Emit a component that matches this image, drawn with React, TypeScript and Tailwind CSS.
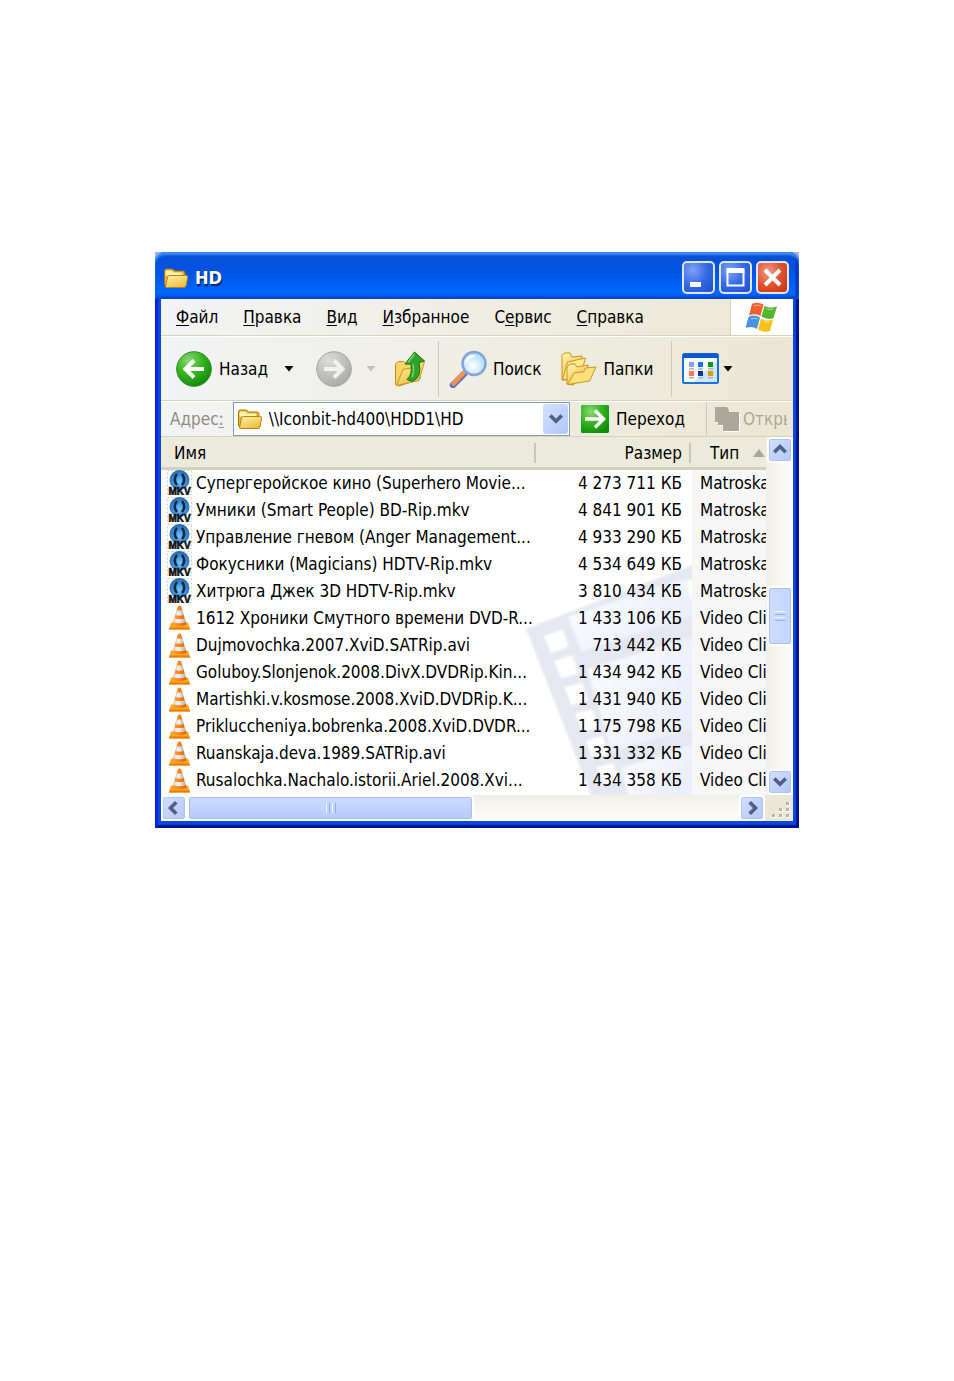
import type { ReactNode } from 'react';

// =============================================================================
// DATA
// =============================================================================
const MENU_ITEMS = [
  { before: '', key: 'Ф', after: 'айл' },
  { before: '', key: 'П', after: 'равка' },
  { before: '', key: 'В', after: 'ид' },
  { before: '', key: 'И', after: 'збранное' },
  { before: 'С', key: 'е', after: 'рвис' },
  { before: '', key: 'С', after: 'правка' },
];

const FILES = [
  { name: 'Супергеройское кино (Superhero Movie...', size: '4 273 711 КБ', kind: 'mkv' },
  { name: 'Умники (Smart People) BD-Rip.mkv', size: '4 841 901 КБ', kind: 'mkv' },
  { name: 'Управление гневом (Anger Management...', size: '4 933 290 КБ', kind: 'mkv' },
  { name: 'Фокусники (Magicians) HDTV-Rip.mkv', size: '4 534 649 КБ', kind: 'mkv' },
  { name: 'Хитрюга Джек 3D HDTV-Rip.mkv', size: '3 810 434 КБ', kind: 'mkv' },
  { name: '1612 Хроники Смутного времени DVD-R...', size: '1 433 106 КБ', kind: 'avi' },
  { name: 'Dujmovochka.2007.XviD.SATRip.avi', size: '713 442 КБ', kind: 'avi' },
  { name: 'Goluboy.Slonjenok.2008.DivX.DVDRip.Kin...', size: '1 434 942 КБ', kind: 'avi' },
  { name: 'Martishki.v.kosmose.2008.XviD.DVDRip.K...', size: '1 431 940 КБ', kind: 'avi' },
  { name: 'Prikluccheniya.bobrenka.2008.XviD.DVDR...', size: '1 175 798 КБ', kind: 'avi' },
  { name: 'Ruanskaja.deva.1989.SATRip.avi', size: '1 331 332 КБ', kind: 'avi' },
  { name: 'Rusalochka.Nachalo.istorii.Ariel.2008.Xvi...', size: '1 434 358 КБ', kind: 'avi' },
];

// =============================================================================
// ICONS
// =============================================================================

// Gradients shared by all the icons
const IconDefs = () => (
  <svg className="absolute h-0 w-0" aria-hidden="true">
    <defs>
      <linearGradient id="folder" x1="0" y1="0" x2="0.6" y2="1">
        <stop offset="0" stopColor="#fff6ae" />
        <stop offset="1" stopColor="#f0bc42" />
      </linearGradient>
      <radialGradient id="green" cx="0.35" cy="0.25" r="0.8">
        <stop offset="0" stopColor="#8ad974" />
        <stop offset="0.5" stopColor="#35b41f" />
        <stop offset="1" stopColor="#0f8a0b" />
      </radialGradient>
      <radialGradient id="grey" cx="0.35" cy="0.25" r="0.8">
        <stop offset="0" stopColor="#dcdcda" />
        <stop offset="1" stopColor="#a9a9a6" />
      </radialGradient>
      <radialGradient id="ball" cx="0.5" cy="0.6" r="0.6">
        <stop offset="0" stopColor="#74c4f6" />
        <stop offset="0.6" stopColor="#3c8bd2" />
        <stop offset="1" stopColor="#2462a6" />
      </radialGradient>
      <radialGradient id="lens" cx="0.45" cy="0.6" r="0.6">
        <stop offset="0" stopColor="#ffffff" />
        <stop offset="1" stopColor="#a8dcfa" />
      </radialGradient>
      <linearGradient id="cone" x1="0" y1="0" x2="1" y2="0">
        <stop offset="0" stopColor="#ffa040" />
        <stop offset="0.5" stopColor="#ff8212" />
        <stop offset="1" stopColor="#d95c00" />
      </linearGradient>
      <linearGradient id="band" x1="0" y1="0" x2="1" y2="0">
        <stop offset="0" stopColor="#d2d2d2" />
        <stop offset="0.4" stopColor="#f2f2f2" />
        <stop offset="1" stopColor="#b4b4b4" />
      </linearGradient>
    </defs>
  </svg>
);

const FolderIcon = () => (
  <svg viewBox="0 0 26 22" className="h-[22px] w-[26px] shrink-0" aria-hidden="true">
    <path d="M1.500 18V4q0-2 2-2h5q2 0 3 2h8.500q2 0 2 2v13z" fill="#e9b83c" stroke="#a87408" />
    <path d="M2.500 5q0-1.500 1.500-1.500h3.500q1.500 0 2.500 2h9v3h-16.500z" fill="#fff2a8" />
    <path d="M2.500 20L4.500 10q.5-1.500 2-1.500h17q1.500 0 1.200 1.500l-1.700 9q-.5 1.500-2 1.500H3.500q-1 0-1-.5z" fill="url(#folder)" stroke="#b8860f" />
  </svg>
);

const RoundArrow = ({ forward = false }: { forward?: boolean }) => (
  <svg viewBox="0 0 36 36" className="h-9 w-9" aria-hidden="true">
    <circle cx="18" cy="18" r="17.300" fill={forward ? 'url(#grey)' : 'url(#green)'} stroke={forward ? '#a5a5a2' : '#2a8b22'} />
    <path
      d={forward ? 'M8 18h18M18 9.500l8.500 8.500-8.500 8.500' : 'M28 18H10M18 9.500L9.500 18l8.500 8.500'}
      fill="none"
      stroke={forward ? '#f1f1ee' : '#fff'}
      strokeWidth="4"
    />
  </svg>
);

const UpFolderIcon = () => (
  <svg viewBox="0 0 32 36" className="h-9 w-8" aria-hidden="true">
    <path d="M1.500 33.500V13l3-2.500h5l2.500 2.500 12-1 2 3v13L5 35z" fill="#f6d568" stroke="#c08a14" />
    <path d="M2.500 34.500L9 18.500l8-1.500 3-5 10.500-1.500-5.500 19z" fill="url(#folder)" stroke="#c9971f" />
    <path d="M13 28.500q5.500-4 4-15.500h-6L20.500 1 30.500 10l-5.500 1.500q3.500 15-7 19z" fill="#2fa32a" stroke="#16760f" />
    <path d="M14 11.500L20.500 3M19 13q1.500 8-1 13" fill="none" stroke="#7ed36c" strokeWidth="1.500" />
  </svg>
);

const SearchIcon = () => (
  <svg viewBox="0 0 38 38" className="h-[38px] w-[38px]" aria-hidden="true">
    <path d="M4 35L15 24" stroke="#6a6db8" strokeWidth="6.500" strokeLinecap="round" />
    <path d="M4.500 33.500L14.500 23" stroke="#ee9450" strokeWidth="4.500" strokeLinecap="round" />
    <circle cx="25" cy="13.500" r="11.500" fill="url(#lens)" stroke="#84a4de" strokeWidth="2.500" />
    <path d="M17.500 11.500q2-5 7-5.500" fill="none" stroke="#fff" strokeWidth="2.500" strokeLinecap="round" />
  </svg>
);

const FoldersIcon = () => (
  <svg viewBox="0 0 36 34" className="h-[34px] w-9" aria-hidden="true">
    <path d="M1 28V3l3-2h5l2 4 10-1v9L6 28z" fill="url(#folder)" stroke="#c9951c" />
    <path d="M1.500 28l5-18 18-4-5 18z" fill="#fdeb92" stroke="#c9951c" />
    <path d="M6 32V15l3-3h5l2 3 11-2v7L12 33z" fill="url(#folder)" stroke="#c9951c" />
    <path d="M6.500 32.500l7-12 9-.5 2-4 10.500-1-6.500 14z" fill="#fbe07a" stroke="#c9951c" />
  </svg>
);

const VIEW_SWATCHES = [
  { x: 7, y: 9, color: '#9a9ad6' },
  { x: 16, y: 9, color: '#1177e8' },
  { x: 26, y: 9, color: '#0e9a10' },
  { x: 7, y: 18, color: '#ff7c4a' },
  { x: 16, y: 18, color: '#0b35a5' },
  { x: 26, y: 18, color: '#d49c00' },
];

const ViewsIcon = () => (
  <svg viewBox="0 0 37 31" className="h-[31px] w-[37px]" aria-hidden="true">
    <rect x="1" y="1" width="35" height="29" rx="1.500" fill="#f4f9ff" stroke="#1a72dc" strokeWidth="2" />
    <path d="M1 2q0-1.500 1.500-1.500h32Q36 .5 36 2v3H1z" fill="#0a58d4" />
    <path d="M35 8v21H12z" fill="#cfe3fb" />
    {VIEW_SWATCHES.map((s) => (
      <g key={s.color}>
        <rect x={s.x} y={s.y} width="5" height="5" fill={s.color} />
        <rect x={s.x} y={s.y + 6} width="5" height="1.500" fill="#b4b4b4" />
      </g>
    ))}
  </svg>
);

const GoIcon = () => (
  <svg viewBox="0 0 30 30" className="h-[30px] w-[30px]" aria-hidden="true">
    <rect x="0.500" y="0.500" width="29" height="29" rx="2" fill="url(#green)" stroke="#e6f2e0" />
    <path d="M5 15h18M15 6.500l8.500 8.500-8.500 8.500" fill="none" stroke="#fff" strokeWidth="3.500" />
  </svg>
);

const OpenIcon = () => (
  <svg viewBox="0 0 27 27" className="h-[27px] w-[27px] shrink-0" aria-hidden="true">
    <path d="M2 2h12l2 3v3h10v18H10v-6H5v-3H2z" fill="#fff" />
    <path d="M1 1h12l2 3v2h10v19H9v-6H4v-3H1z" fill="#aca899" />
  </svg>
);

const FlagIcon = () => (
  <svg viewBox="0 0 32 30" className="h-[30px] w-8" aria-hidden="true">
    <path d="M6 2Q11-.5 17.500 2.500l-3 11.500Q9 11 3 13.500z" fill="#ee6230" />
    <path d="M18.500 4q6 3 12.500 .5L27.500 16q-6 2.500-12-1.500z" fill="#54b52e" />
    <path d="M2.500 15q6-3 11.500 0.500L11 27q-5-3.500-11.500-1z" fill="#4a93e2" />
    <path d="M15 16.500q6 3.500 12 1L24 29q-5.500 2-12-1.500z" fill="#f8c11a" />
    <path d="M8 4q4-2 7 0M20 6.500q4 2 7 .8M5 17q3-1.500 6.500 0M17 19q3 1.500 6 .8" fill="none" stroke="#fff" strokeOpacity=".5" />
  </svg>
);

const MkvIcon = () => (
  <svg viewBox="0 0 25 25" className="h-[25px] w-[25px] shrink-0" aria-hidden="true">
    <rect x="0.500" y="0.500" width="24" height="24" fill="none" stroke="#cfcfcf" strokeDasharray="2 2" />
    <circle cx="12.500" cy="10" r="10" fill="url(#ball)" />
    <path d="M10 4Q5.500 9.500 10 15M15 4q4.500 5.500 0 11" fill="none" stroke="#0c2440" strokeWidth="2.400" />
    <text x="12.500" y="24.800" textAnchor="middle" fontFamily="Liberation Sans, sans-serif" fontWeight="700" fontSize="10" fill="#111" stroke="#111" strokeWidth=".6">MKV</text>
  </svg>
);

const ConeIcon = () => (
  <svg viewBox="0 0 25 25" className="h-[25px] w-[25px] shrink-0" aria-hidden="true">
    <path d="M4 17.500h17l2 7H2z" fill="#ffa51e" />
    <path d="M2.400 22.500h20.200l.4 2.100H2z" fill="#ee7a06" />
    <path d="M11 1q1.500-1.200 3 0l5.500 18.500q-7 3-14 0z" fill="url(#cone)" />
    <path d="M9.800 5.500h5.400l1.500 4.600q-4.200 1.200-8.400 0z" fill="url(#band)" />
    <path d="M7.200 13.500q5.300 1.200 10.600 0l1 3.800q-6.300 1.800-12.600 0z" fill="url(#band)" />
  </svg>
);

const CaretDown = ({ muted = false }: { muted?: boolean }) => (
  <svg viewBox="0 0 10 6" className={`h-1.5 w-2.5 ${muted ? 'text-[#c4c1b6]' : 'text-black'}`} aria-hidden="true">
    <path d="M.5 0h9L5 5.500z" fill="currentColor" />
  </svg>
);

const CHEVRONS = {
  up: 'M2 9l5-5 5 5',
  down: 'M2 4l5 5 5-5',
  left: 'M9 2L4 7l5 5',
  right: 'M5 2l5 5-5 5',
};

const Chevron = ({ dir }: { dir: keyof typeof CHEVRONS }) => (
  <svg viewBox="0 0 14 14" className="h-4 w-4" aria-hidden="true">
    <path d={CHEVRONS[dir]} fill="none" stroke="#4d6185" strokeWidth="3.200" />
  </svg>
);

// Film strip drawn behind the file list
const FilmStrip = () => (
  <svg viewBox="0 0 576 735" className="absolute right-[74px] bottom-0 h-[245px] w-48" aria-hidden="true">
    <defs>
      <linearGradient id="film" x1="0" y1="0" x2="1" y2="0.5">
        <stop offset="0" stopColor="#fdfdff" />
        <stop offset="1" stopColor="#ebeffb" />
      </linearGradient>
      <filter id="soft">
        <feGaussianBlur stdDeviation="3" />
      </filter>
    </defs>
    <g filter="url(#soft)">
      <path d="M78 236L590 40v700H275Z" fill="#e5e8f0" />
      <path d="M204 200L560 85l30 110-345 108z" fill="url(#film)" />
      <path d="M262 358l328-100v275l-255 70z" fill="url(#film)" />
      <path d="M362 655l228-75v160H385z" fill="url(#film)" />
      <path d="M560 92l30-8v60l-18 4z" fill="#fff" />
      <path d="M132 258l56-20 18 52-52 20zM162 332l56-16 18 54-52 16zM194 412l52-14 18 54-50 14zM226 490l52-12 18 54-50 14zM258 572l50-14 18 54-48 14zM290 652l50-14 18 54-48 14z" fill="#fff" />
    </g>
  </svg>
);

// =============================================================================
// CONTROLS
// =============================================================================

const CaptionButton = ({ label, close = false, children }: { label: string; close?: boolean; children: ReactNode }) => (
  <button
    type="button"
    aria-label={label}
    className={`h-[33px] w-[33px] rounded-[5px] border-2 border-[#dfe8fb] ${
      close
        ? 'bg-radial-[at_35%_30%] from-[#f0a08a] via-[#e05030] to-[#c8320c]'
        : 'bg-radial-[at_30%_25%] from-[#7fa3f5] via-[#3468e6] to-[#1e4fd0]'
    }`}
  >
    <svg viewBox="0 0 29 29" className="h-[29px] w-[29px]" fill="none" stroke="#fff" aria-hidden="true">
      {children}
    </svg>
  </button>
);

const ScrollButton = ({ label, dir }: { label: string; dir: keyof typeof CHEVRONS }) => (
  <button
    type="button"
    aria-label={label}
    className="flex h-[26px] w-[26px] shrink-0 items-center justify-center rounded-[4px] border-2 border-white bg-linear-to-br from-[#d3e0fe] to-[#b2c6f8] shadow-[inset_0_0_0_1px_#b0c5f4]"
  >
    <Chevron dir={dir} />
  </button>
);

const ToolbarDivider = () => <div className="h-[56px] w-px shrink-0 bg-[#cfcab4]" />;

// =============================================================================
// WINDOW PARTS
// =============================================================================

const TitleBar = () => (
  <header className="flex h-[47px] items-center rounded-t-[10px] bg-linear-to-b from-[#0a4fd0] from-0% via-[#0055e6] via-45% to-[#0066ff] to-85% pt-1 pr-2.5 pl-2 shadow-[inset_0_3px_2px_#3a8ffb,inset_0_-3px_3px_#0a44c8,inset_-3px_0_2px_#0a2fb8]">
    <FolderIcon />
    <h1 className="ml-1.5 flex-1 text-[18px] font-bold text-white [text-shadow:1px_2px_1px_#0a1f6b]">HD</h1>
    <div className="flex gap-1">
      <CaptionButton label="Свернуть">
        <path d="M6 21.500h11" strokeWidth="5" />
      </CaptionButton>
      <CaptionButton label="Развернуть">
        <path d="M6.500 8v14.500h16V8" strokeWidth="2" />
        <path d="M5.500 7.500h18" strokeWidth="5" />
      </CaptionButton>
      <CaptionButton label="Закрыть" close>
        <path d="M7 7l15 15M22 7L7 22" strokeWidth="4" />
      </CaptionButton>
    </div>
  </header>
);

const MenuBar = () => (
  <div className="flex h-[37px] border-b border-[#d8d2bd]">
    <nav className="flex flex-1 items-center gap-[25px] pl-[15px]">
      {MENU_ITEMS.map((item) => (
        <button key={item.key + item.after} type="button">
          {item.before}
          <u className="underline-offset-2">{item.key}</u>
          {item.after}
        </button>
      ))}
    </nav>
    <div className="flex w-[63px] items-center justify-center border-l border-[#d8d2bd] bg-white">
      <FlagIcon />
    </div>
  </div>
);

const Toolbar = () => (
  <div className="flex h-[65px] items-center border-t border-b border-t-white border-b-[#d8d2bd] pl-[15px]">
    <button type="button" className="flex items-center gap-[7px]">
      <RoundArrow />
      Назад
    </button>
    <button type="button" aria-label="Список назад" className="ml-4">
      <CaretDown />
    </button>
    <button type="button" aria-label="Вперед" className="ml-[22px]">
      <RoundArrow forward />
    </button>
    <button type="button" aria-label="Список вперед" className="ml-3.5">
      <CaretDown muted />
    </button>
    <button type="button" aria-label="Вверх" className="mr-3 ml-[18px]">
      <UpFolderIcon />
    </button>
    <ToolbarDivider />
    <button type="button" className="ml-2.5 flex items-center gap-1.5">
      <SearchIcon />
      Поиск
    </button>
    <button type="button" className="mr-[18px] ml-5 flex items-center gap-1.5">
      <FoldersIcon />
      Папки
    </button>
    <ToolbarDivider />
    <button type="button" aria-label="Вид" className="ml-2.5 flex items-center gap-1">
      <ViewsIcon />
      <CaretDown />
    </button>
  </div>
);

const AddressBar = () => (
  <div className="flex h-9 items-center border-t border-b border-t-white border-b-[#d8d2bd] pl-[9px]">
    <label htmlFor="address" className="mr-[9px] text-[#8f8c80]">
      Адрес<u className="underline-offset-2">:</u>
    </label>
    <div className="flex h-[34px] flex-1 items-center border border-[#7f9db9] bg-white pr-px pl-[3px]">
      <FolderIcon />
      <input
        id="address"
        type="text"
        defaultValue="\\Iconbit-hd400\HDD1\HD"
        className="ml-1.5 min-w-0 flex-1 bg-transparent outline-none"
      />
      <button
        type="button"
        aria-label="Список адресов"
        className="flex h-[30px] w-[25px] items-center justify-center rounded-[3px] bg-linear-to-br from-[#d3e0fe] to-[#b2c6f8]"
      >
        <Chevron dir="down" />
      </button>
    </div>
    <button type="button" className="ml-2.5 flex w-[126px] items-center gap-1.5">
      <GoIcon />
      Переход
    </button>
    <div className="h-full w-px bg-[#d0cbb8]" />
    <button type="button" className="mr-1.5 ml-[7px] flex w-[73px] items-center gap-0.5 overflow-hidden text-[#aca899]">
      <OpenIcon />
      Откры
    </button>
  </div>
);

const FileList = () => (
  <div className="relative min-w-0 flex-1 overflow-hidden bg-white">
    <FilmStrip />
    <table className="relative h-[358px] w-full table-fixed border-collapse text-left">
      <colgroup>
        <col />
        <col className="w-[156px]" />
        <col className="w-[74px]" />
      </colgroup>
      <thead className="bg-[#ebeadb] shadow-[inset_0_-3px_#d5d1c1]">
        <tr className="h-[33px]">
          <th scope="col" className="p-0 pb-0.5 pl-[13px] font-normal">
            <div className="border-r-2 border-[#cbc7b8]">Имя</div>
          </th>
          <th scope="col" className="p-0 pr-px pb-0.5 text-right font-normal">
            <div className="border-r-2 border-[#cbc7b8] pr-[7px]">Размер</div>
          </th>
          <th scope="col" className="p-0 pb-0.5 pl-[18px] font-normal">
            <div className="flex items-center gap-3.5 overflow-hidden">
              Тип
              <svg viewBox="0 0 12 8" className="h-2 w-3 shrink-0" aria-hidden="true">
                <path d="M6 0l6 8H0z" fill="#aca899" />
              </svg>
            </div>
          </th>
        </tr>
      </thead>
      <tbody>
        {FILES.map((file) => (
          <tr key={file.name}>
            <td className="p-0 pl-1.5">
              <div className="flex h-[27px] items-center gap-1 pb-0.5 whitespace-nowrap">
                {file.kind === 'mkv' ? <MkvIcon /> : <ConeIcon />}
                {file.name}
              </div>
            </td>
            <td className="p-0 pr-2.5 pb-0.5 text-right whitespace-nowrap">{file.size}</td>
            <td className="overflow-hidden bg-[#f7f7f7] p-0 pb-0.5 pl-2 whitespace-nowrap">
              {file.kind === 'mkv' ? 'Matroska' : 'Video Cli'}
            </td>
          </tr>
        ))}
      </tbody>
    </table>
  </div>
);

const VerticalScrollbar = () => (
  <div className="flex w-[27px] flex-col items-center bg-linear-to-r from-[#f1efe9] to-[#fefefb]">
    <ScrollButton label="Прокрутить вверх" dir="up" />
    <div className="flex flex-1 flex-col items-center justify-center">
      <div className="flex h-[60px] w-[26px] flex-col items-center justify-center gap-0.5 rounded-[4px] border-2 border-white bg-linear-to-r from-[#cddcfe] to-[#c3d6fd] shadow-[inset_0_0_0_1px_#a9c0f2]">
        <i className="h-px w-2.5 bg-[#f0f5ff]" />
        <i className="h-px w-2.5 bg-[#8fb0f0]" />
        <i className="h-px w-2.5 bg-[#f0f5ff]" />
        <i className="h-px w-2.5 bg-[#8fb0f0]" />
      </div>
    </div>
    <ScrollButton label="Прокрутить вниз" dir="down" />
  </div>
);

const HorizontalScrollbar = () => (
  <div className="flex h-[26px] bg-linear-to-b from-[#f1efe9] to-[#fefefb]">
    <ScrollButton label="Прокрутить влево" dir="left" />
    <div className="flex flex-1">
      <div className="flex w-[52%] items-center justify-center gap-0.5 rounded-[4px] border-2 border-white bg-linear-to-b from-[#cddcfe] to-[#b6c9fa] shadow-[inset_0_0_0_1px_#a9c0f2]">
        <i className="h-2.5 w-px bg-[#f0f5ff]" />
        <i className="h-2.5 w-px bg-[#8fb0f0]" />
        <i className="h-2.5 w-px bg-[#f0f5ff]" />
        <i className="h-2.5 w-px bg-[#8fb0f0]" />
      </div>
    </div>
    <ScrollButton label="Прокрутить вправо" dir="right" />
    <svg viewBox="0 0 28 26" className="h-[26px] w-7 bg-[#ebe8d8]" aria-hidden="true">
      <path d="M21 7h4v4h-4zM21 13h4v4h-4zM21 19h4v4h-4zM14 13h4v4h-4zM14 19h4v4h-4zM7 19h4v4H7z" fill="#fff" />
      <path d="M21 7h3v3h-3zM21 13h3v3h-3zM21 19h3v3h-3zM14 13h3v3h-3zM14 19h3v3h-3zM7 19h3v3H7z" fill="#b8b4a2" />
    </svg>
  </div>
);

// =============================================================================
// MAIN COMPONENT
// =============================================================================
export default function App() {
  return (
    <main className="min-h-screen bg-white px-[155px] pt-[252px] pb-16 font-['DejaVu_Sans_Condensed','DejaVu_Sans',sans-serif] text-[17px] leading-5 text-black">
      <IconDefs />
      <section className="bg-[#9db4e6]">
        <TitleBar />
        <div className="bg-[#0a48e0] px-1.5 pb-[7px] shadow-[inset_3px_0_1px_#0a22d0,inset_-3px_-3px_1px_#00138c]">
          <div className="bg-linear-to-r from-[#f2f3f4] via-[#efeee4] via-50% to-[#ebe7d3]">
            <MenuBar />
            <Toolbar />
            <AddressBar />
          </div>
          <div className="flex">
            <FileList />
            <VerticalScrollbar />
          </div>
          <HorizontalScrollbar />
        </div>
      </section>
    </main>
  );
}
